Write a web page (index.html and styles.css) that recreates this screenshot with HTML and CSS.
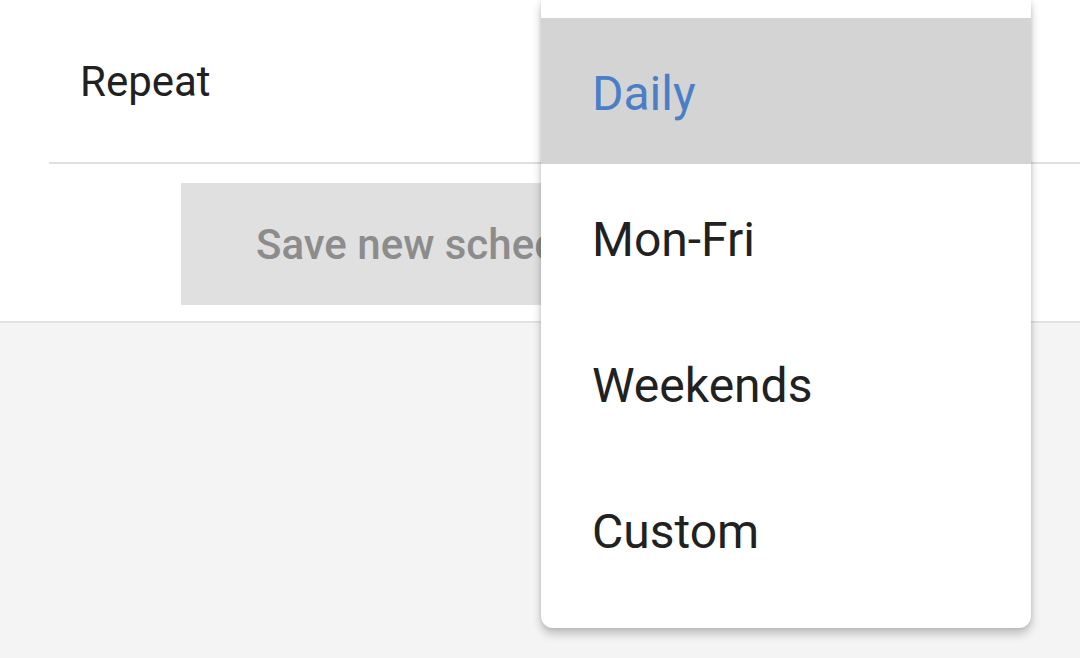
FILE: index.html
```html
<!DOCTYPE html>
<html lang="en">
<head>
<meta charset="utf-8">
<title>Repeat</title>
<link rel="stylesheet" href="styles.css">
</head>
<body>
<div class="screen">
  <section class="panel">
    <div class="row">
      <span class="label">Repeat</span>
    </div>
    <div class="divider"></div>
    <div class="actions">
      <button class="save-btn" type="button">Save new schedule</button>
    </div>
  </section>
  <ul class="menu">
    <li class="menu-item selected">Daily</li>
    <li class="menu-item">Mon-Fri</li>
    <li class="menu-item">Weekends</li>
    <li class="menu-item">Custom</li>
  </ul>
</div>
</body>
</html>
```

FILE: styles.css
```css
html, body {
  margin: 0;
  padding: 0;
}
body {
  width: 1080px;
  height: 658px;
  overflow: hidden;
  background: #f4f4f4;
  font-family: Roboto, "Noto Sans", sans-serif;
  color: #212121;
}
.screen {
  position: relative;
  width: 1080px;
  height: 658px;
}
.panel {
  background: #ffffff;
  border-bottom: 2px solid #e2e2e2;
  height: 321px;
  box-sizing: content-box;
}
.row {
  height: 162px;
  display: flex;
  align-items: center;
  padding-left: 80px;
}
.label {
  font-size: 42px;
  line-height: 1;
  margin-top: 2px;
}
.divider {
  margin-left: 49px;
  height: 2px;
  background: #e0e0e0;
}
.actions {
  padding: 19px 49px 0 181px;
}
.save-btn {
  display: block;
  width: 850px;
  height: 122px;
  border: none;
  background: #e0e0e0;
  color: #8c8c8c;
  font-family: Roboto, "Noto Sans", sans-serif;
  font-weight: 500;
  font-size: 42px;
  text-align: left;
  padding: 0 0 0 75px;
  white-space: nowrap;
}
.menu {
  position: absolute;
  left: 541px;
  top: 0;
  width: 490px;
  margin: 0;
  padding: 18px 0 26px;
  list-style: none;
  background: #ffffff;
  border-radius: 0 0 12px 12px;
  box-shadow: 0 6px 10px rgba(0, 0, 0, 0.22), 0 0 4px rgba(0, 0, 0, 0.12);
}
.menu-item {
  height: 141px;
  line-height: 141px;
  padding: 5px 0 0 51px;
  font-size: 48px;
  color: #212121;
}
.menu-item.selected {
  background: #d4d4d4;
  color: #4a7fc7;
}
```
